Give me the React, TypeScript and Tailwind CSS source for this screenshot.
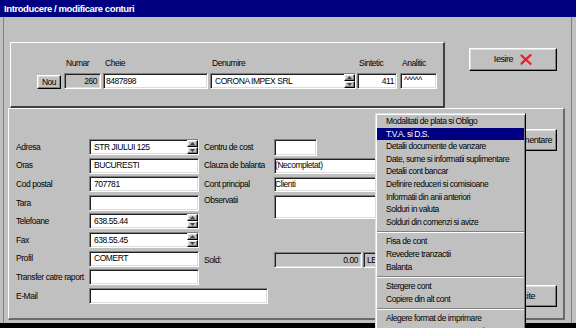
import React from "react"

const sunken =
  "border border-t-[#808080] border-l-[#808080] border-r-white border-b-white shadow-[inset_1px_1px_0_#202020,inset_-1px_-1px_0_#dcdcdc]"
const raised =
  "border border-t-white border-l-white border-r-black border-b-black shadow-[inset_-1px_-1px_0_#808080,inset_1px_1px_0_#dfdfdf]"

function Spin() {
  return (
    <div className="flex h-full w-[11px] shrink-0 flex-col">
      <div className={`${raised} flex flex-1 items-center justify-center bg-[#c0c0c0]`}>
        <svg width="5" height="3" viewBox="0 0 5 3">
          <path d="M0 3h5L2.5 0z" fill="#404040" />
        </svg>
      </div>
      <div className={`${raised} flex flex-1 items-center justify-center bg-[#c0c0c0]`}>
        <svg width="5" height="3" viewBox="0 0 5 3">
          <path d="M0 0h5L2.5 3z" fill="#404040" />
        </svg>
      </div>
    </div>
  )
}

type FieldProps = {
  value?: string
  className?: string
  textClass?: string
  gray?: boolean
  spin?: boolean
}

function Field({ value = "", className = "", textClass = "pl-[4px]", gray = false, spin = false }: FieldProps) {
  return (
    <div className={`${sunken} flex shrink-0 ${gray ? "bg-[#c0c0c0]" : "bg-white"} ${className}`}>
      <div className={`flex flex-1 items-center overflow-hidden whitespace-nowrap ${textClass}`}>{value}</div>
      {spin && <Spin />}
    </div>
  )
}

function Column({ label, children }: { label: string; children: React.ReactNode }) {
  return (
    <div className="flex flex-col">
      <div className="mb-[4px] flex h-[12px] items-center pl-[2px]">{label}</div>
      {children}
    </div>
  )
}

function Row({ label, children }: { label: string; children: React.ReactNode }) {
  return (
    <div className="flex h-[16px] items-center">
      <div className="w-[73px] shrink-0 whitespace-nowrap">{label}</div>
      {children}
    </div>
  )
}

function MidRow({ label, children, tall = false }: { label: string; children: React.ReactNode; tall?: boolean }) {
  return (
    <div className={`flex ${tall ? "h-[24px] items-start" : "h-[16px] items-center"}`}>
      <div className={`w-[70px] shrink-0 whitespace-nowrap ${tall ? "pt-[1px]" : ""}`}>{label}</div>
      {children}
    </div>
  )
}

const menu: (string | null)[] = [
  "Modalitati de plata si Obligo",
  "T.V.A. si D.S.",
  "Detalii documente de vanzare",
  "Date, sume si informatii suplimentare",
  "Detalii cont bancar",
  "Definire reduceri si comisioane",
  "Informatii din anii anteriori",
  "Solduri in valuta",
  "Solduri din comenzi si avize",
  null,
  "Fisa de cont",
  "Revedere tranzactii",
  "Balanta",
  null,
  "Stergere cont",
  "Copiere din alt cont",
  null,
  "Alegere format de imprimare",
  "Numerotare automata conturi",
]

export default function App() {
  return (
    <div className="relative flex h-[328px] w-[576px] flex-col overflow-hidden bg-[#c0c0c0] font-['Liberation_Sans',Arial,sans-serif] text-[8.5px] leading-none tracking-[-0.45px] text-black">
      <div className="flex h-[17px] shrink-0 items-center bg-[#000080] pl-[4px] text-[9.5px] font-bold tracking-[-0.4px] text-white">
        Introducere / modificare conturi
      </div>

      <div className="ml-[3px] mr-[4px] flex flex-1 flex-col border-x border-[#808080]">
        {/* top: account key */}
        <div className="flex h-[91px] shrink-0 items-start">
          <div className="ml-[6px] mt-[25px] flex h-[66px] w-[435px] items-start border-t border-l border-r-2 border-b-2 border-t-white border-l-white border-r-[#404040] border-b-[#404040] pl-[26px] pt-[14px]">
            <div className="flex items-end">
              <div className={`${raised} flex h-[14px] w-[24px] items-center justify-center bg-[#c0c0c0]`}>Nou</div>
              <div className="ml-[3px]">
                <Column label="Numar">
                  <Field value="260" gray className="h-[16px] w-[37px]" textClass="justify-end pr-[3px]" />
                </Column>
              </div>
              <div className="ml-[2px]">
                <Column label="Cheie">
                  <Field value="8487898" className="h-[16px] w-[105px]" textClass="pl-[2px]" />
                </Column>
              </div>
              <div className="ml-[2px]">
                <Column label="Denumire">
                  <Field value="CORONA IMPEX SRL" spin className="h-[16px] w-[146px]" />
                </Column>
              </div>
              <div className="ml-[1px]">
                <Column label="Sintetic">
                  <Field value="411" className="h-[16px] w-[40px]" textClass="justify-end pr-[2px]" />
                </Column>
              </div>
              <div className="ml-[3px]">
                <Column label="Analitic">
                  <Field value="^^^^^" className="h-[16px] w-[37px]" textClass="items-start pl-[3px] pt-[2px]" />
                </Column>
              </div>
            </div>
          </div>

          <div className={`${raised} ml-[24px] mt-[31px] flex h-[23px] w-[88px] items-center justify-center gap-[7px] bg-[#c0c0c0] text-[9px]`}>
            <span>Iesire</span>
            <svg width="12" height="11" viewBox="0 0 12 11">
              <path d="M1.5 1.5C4.5 4.5 7.5 7 10.5 9.8" stroke="#e3222e" strokeWidth="2.3" strokeLinecap="round" fill="none" />
              <path d="M10.5 1.2C7.5 4 4.5 6.8 1.6 9.6" stroke="#e3222e" strokeWidth="2.3" strokeLinecap="round" fill="none" />
            </svg>
          </div>
        </div>

        {/* lower: account details */}
        <div className="ml-[4px] flex h-[212px] w-[557px] shrink-0 border-t border-l border-r-2 border-b-2 border-t-white border-l-white border-r-[#6a6a6a] border-b-[#6a6a6a]">
          <div className="flex w-[190px] shrink-0 flex-col gap-[2.6px] pl-[7px] pt-[30px]">
            <Row label="Adresa">
              <Field value="STR JIULUI 125" spin className="h-[16px] w-[110px]" />
            </Row>
            <Row label="Oras">
              <Field value="BUCURESTI" className="h-[16px] w-[110px]" />
            </Row>
            <Row label="Cod postal">
              <Field value="707781" className="h-[16px] w-[110px]" />
            </Row>
            <Row label="Tara">
              <Field className="h-[16px] w-[110px]" />
            </Row>
            <Row label="Telefoane">
              <Field value="638.55.44" spin className="h-[16px] w-[110px]" />
            </Row>
            <Row label="Fax">
              <Field value="638.55.45" spin className="h-[16px] w-[110px]" />
            </Row>
            <Row label="Profil">
              <Field value="COMERT" className="h-[16px] w-[110px]" />
            </Row>
            <Row label="Transfer catre raport">
              <Field className="h-[16px] w-[110px]" />
            </Row>
            <Row label="E-Mail">
              <Field className="h-[16px] w-[179px]" />
            </Row>
          </div>

          <div className="ml-[5px] flex w-[260px] shrink-0 flex-col gap-[2.6px] pt-[30px]">
            <MidRow label="Centru de cost">
              <Field className="h-[17px] w-[43px]" />
            </MidRow>
            <MidRow label="Clauza de balanta">
              <Field value="(Necompletat)" className="h-[16px] w-[190px]" textClass="pl-0" />
            </MidRow>
            <MidRow label="Cont principal">
              <Field value="Clienti" className="h-[15px] w-[190px]" textClass="pl-0" />
            </MidRow>
            <MidRow label="Observatii" tall>
              <Field className="h-[24px] w-[190px]" />
            </MidRow>
            <div className="mt-[31px] flex h-[16px] items-center">
              <div className="w-[70px] shrink-0">Sold:</div>
              <Field value="0.00" gray className="h-[16px] w-[88px]" textClass="justify-end pr-[3px]" />
              <Field value="LEI" gray className="ml-[1px] h-[16px] w-[30px]" textClass="pl-[3px]" />
            </div>
          </div>

          <div className="ml-auto mr-[6px] flex flex-col pt-[20px]">
            <div className={`${raised} flex h-[22px] w-[87px] items-center justify-end bg-[#c0c0c0] pr-[4px] text-[9px]`}>
              Suplimentare
            </div>
            <div className={`${raised} mt-[134px] flex h-[22px] w-[87px] items-center justify-end bg-[#c0c0c0] pr-[21px] text-[9px]`}>
              Implicite
            </div>
          </div>
        </div>
      </div>

      <div className="h-[5px] shrink-0 bg-black" />

      {/* context menu */}
      <div className="absolute left-[375px] top-[113px] h-[230px] w-[151px] border border-t-[#dfdfdf] border-l-[#dfdfdf] border-r-black border-b-black bg-[#c0c0c0] px-[1px] pt-[1px] shadow-[inset_1px_1px_0_#fff,inset_-1px_-1px_0_#808080]">
        {menu.map((item, i) =>
          item === null ? (
            <div key={i} className="flex h-[7px] flex-col justify-center">
              <div className="border-t border-b border-t-[#808080] border-b-white" />
            </div>
          ) : (
            <div
              key={i}
              className={`flex h-[12.6px] items-center whitespace-nowrap pl-[9px] ${i === 1 ? "bg-[#000080] text-white" : ""}`}
            >
              {item}
            </div>
          )
        )}
      </div>
    </div>
  )
}
